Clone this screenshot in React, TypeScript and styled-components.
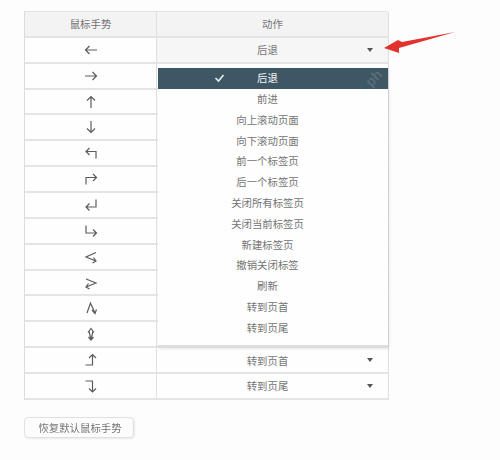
import React from 'react'
import styled, { createGlobalStyle } from 'styled-components'

const GlobalStyle = createGlobalStyle`
  html, body {
    margin: 0;
    padding: 0;
    background: #fdfdfd;
    font-family: "Liberation Sans", "Noto Sans CJK SC", sans-serif;
  }
`

const Page = styled.div`
  position: relative;
  width: 500px;
  height: 460px;
  padding: 11px 0 0 24px;
  box-sizing: border-box;
  overflow: hidden;
  color: #747474;
  font-size: 10.4px;
  filter: blur(0.35px);
`

const Table = styled.div`
  position: relative;
  width: 364px;
  display: grid;
  grid-template-columns: 132px 232px;
  grid-auto-rows: 25.87px;
  border-top: 1px solid #e4e4e4;
  border-left: 1px solid #dcdcdc;
  box-sizing: border-box;
`

const Cell = styled.div<{ $head?: boolean }>`
  display: flex;
  align-items: center;
  justify-content: center;
  box-sizing: border-box;
  border-right: 1px solid #dfdfdf;
  border-bottom: 2px solid #e4e4e4;
  background: ${(p) => (p.$head ? '#f3f3f3' : '#fefefe')};
`

const SelectCell = styled.div<{ $open?: boolean }>`
  display: grid;
  grid-template-columns: 1fr 7px;
  align-items: center;
  justify-items: center;
  padding: 0 15px 0 12px;
  box-sizing: border-box;
  border-right: 1px solid #dfdfdf;
  border-bottom: 2px solid #e4e4e4;
  background: ${(p) => (p.$open ? '#f6f6f6' : '#fefefe')};
`

const Caret = styled.span`
  width: 0;
  height: 0;
  border-left: 3.5px solid transparent;
  border-right: 3.5px solid transparent;
  border-top: 4px solid #555;
`

const Menu = styled.ul`
  position: absolute;
  left: 133px;
  top: 56px;
  width: 230px;
  height: 280px;
  margin: 0;
  padding: 0;
  list-style: none;
  background: #fefefe;
  border-bottom: 3px solid #dcdcdc;
  box-sizing: border-box;
  box-shadow: 1px 1px 3px rgba(0, 0, 0, 0.1);
`

const MenuItem = styled.li<{ $active?: boolean }>`
  position: relative;
  height: 20.8px;
  display: grid;
  grid-template-columns: 1fr auto 1fr;
  align-items: center;
  padding: 0 11px 1.5px 0;
  box-sizing: border-box;
  background: ${(p) => (p.$active ? '#3e5764' : 'transparent')};
  color: ${(p) => (p.$active ? '#f4f6f7' : '#747474')};
`

const MenuText = styled.span`
  grid-column: 2;
`

const Check = styled.svg`
  grid-column: 1;
  grid-row: 1;
  justify-self: end;
  margin-right: 32px;
  width: 11px;
  height: 10px;
`

const Watermark = styled.span`
  position: absolute;
  right: 6px;
  top: 2px;
  font-size: 14px;
  font-weight: bold;
  color: rgba(255, 255, 255, 0.14);
  transform: rotate(-45deg);
`

const ResetButton = styled.button`
  display: block;
  margin-top: 17px;
  width: 110px;
  height: 21px;
  padding: 0 0 0 2px;
  border: 1px solid #e0e0e0;
  border-radius: 4px;
  background: #fcfcfc;
  box-shadow: 1px 1px 2px rgba(0, 0, 0, 0.08);
  color: #747474;
  font: inherit;
`

const GestureSvg = styled.svg`
  width: 20px;
  height: 20px;
  fill: none;
  stroke: #5c5c5c;
  stroke-width: 1.2;
`

const PointerSvg = styled.svg`
  position: absolute;
  left: 382px;
  top: 28px;
  width: 76px;
  height: 26px;
`

// line + arrow head for each gesture, 20x20 box
const gestures: string[] = [
  'M16 10H4.500M8.500 6 4.500 10l4 4',
  'M4 10h11.500M11.500 6l4 4-4 4',
  'M10 16V4.500M6 8.500l4-4 4 4',
  'M10 4v11.500M6 11.500l4 4 4-4',
  'M15 15.500V8.500H5M8.500 5 5 8.500 8.500 12',
  'M5 15.500V8.500h10.500M12 5l3.500 3.500L12 12',
  'M15 4.500v7.500H5M8.500 8.500 5 12l3.500 3.500',
  'M5 4.500V12h10.500M12 8.500l3.500 3.500-3.500 3.500',
  'M15 5.500 5 10l10 4M11.500 16l3.500-2-2.500-3.500',
  'M5 6l10 4-10 4M8.500 16 5 14l2.500-3.500',
  'M6 15 9.500 5 14 15M11 12l3 3.500 1.500-4',
  'M7 8.500l3-4 3 4M8 7l2 9 2-9M7.500 13 10 16l2.500-3',
  'M4.500 15h7V4.500M8 8l3.500-3.500L15 8',
  'M4.500 5h7v11M8 12.500l3.500 3.500 3.500-3.500',
]

const actions: string[] = [
  '后退',
  '前进',
  '向上滚动页面',
  '向下滚动页面',
  '前一个标签页',
  '后一个标签页',
  '关闭所有标签页',
  '关闭当前标签页',
  '新建标签页',
  '撤销关闭标签',
  '刷新',
  '转到页首',
  '转到页尾',
]

const rowLabel = (i: number) => {
  if (i === 0) return '后退'
  if (i === 12) return '转到页首'
  if (i === 13) return '转到页尾'
  return ''
}

export default function App() {
  return (
    <Page>
      <GlobalStyle />
      <Table>
        <Cell $head>鼠标手势</Cell>
        <Cell $head>动作</Cell>
        {gestures.map((d, i) => (
          <React.Fragment key={i}>
            <Cell>
              <GestureSvg viewBox="0 0 20 20">
                <path d={d} />
              </GestureSvg>
            </Cell>
            <SelectCell $open={i === 0}>
              <span>{rowLabel(i)}</span>
              {rowLabel(i) && <Caret />}
            </SelectCell>
          </React.Fragment>
        ))}
        <Menu>
          {actions.map((a, i) => (
            <MenuItem key={a} $active={i === 0}>
              {i === 0 && (
                <Check viewBox="0 0 11 10" fill="none" stroke="#e8eef0" strokeWidth="1.6">
                  <path d="M1.500 5 4.500 8 9.500 2" />
                </Check>
              )}
              {i === 0 && <Watermark>ph</Watermark>}
              <MenuText>{a}</MenuText>
            </MenuItem>
          ))}
        </Menu>
      </Table>
      <ResetButton>恢复默认鼠标手势</ResetButton>
      <PointerSvg viewBox="0 0 76 26">
        <path d="M73 4 20 14 16 12 2 20 17 25 17 20Z" fill="#e0332f" />
      </PointerSvg>
    </Page>
  )
}
